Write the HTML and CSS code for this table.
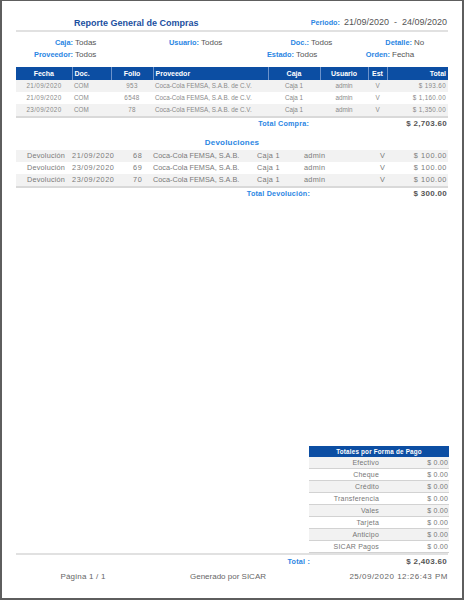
FILE: index.html
```html
<!DOCTYPE html>
<html lang="es">
<head>
<meta charset="utf-8">
<title>Reporte General de Compras</title>
<link rel="stylesheet" href="styles.css">
</head>
<body>
<div class="page">
  <header class="top">
    <h1 class="title">Reporte General de Compras</h1>
    <div class="period"><span class="lbl">Periodo:</span><span class="pval">21/09/2020  -  24/09/2020</span></div>
  </header>
  <div class="rule"></div>

  <div class="filters r1">
    <span class="lbl">Caja:</span><span class="val">Todas</span>
    <span class="lbl">Usuario:</span><span class="val">Todos</span>
    <span class="lbl">Doc.:</span><span class="val">Todos</span>
    <span class="lbl">Detalle:</span><span class="val">No</span>
  </div>
  <div class="filters r2">
    <span class="lbl">Proveedor:</span><span class="val">Todos</span>
    <span class="lbl">Estado:</span><span class="val">Todos</span>
    <span class="lbl">Orden:</span><span class="val">Fecha</span>
  </div>

  <table class="grid">
    <colgroup>
      <col class="w-fecha"><col class="w-doc"><col class="w-folio"><col class="w-prov">
      <col class="w-caja"><col class="w-usr"><col class="w-est"><col class="w-tot">
    </colgroup>
    <thead>
      <tr>
        <th class="c">Fecha</th><th class="l">Doc.</th><th class="c">Folio</th><th class="l">Proveedor</th>
        <th class="c">Caja</th><th class="c">Usuario</th><th class="c">Est</th><th class="r">Total</th>
      </tr>
    </thead>
    <tbody>
      <tr class="odd"><td class="c num">21/09/2020</td><td class="l">COM</td><td class="c num">953</td><td class="l">Coca-Cola FEMSA, S.A.B. de C.V.</td><td class="c">Caja 1</td><td class="c">admin</td><td class="c">V</td><td class="r num">$ 193.60</td></tr>
      <tr><td class="c num">21/09/2020</td><td class="l">COM</td><td class="c num">6548</td><td class="l">Coca-Cola FEMSA, S.A.B. de C.V.</td><td class="c">Caja 1</td><td class="c">admin</td><td class="c">V</td><td class="r num">$ 1,160.00</td></tr>
      <tr class="odd"><td class="c num">23/09/2020</td><td class="l">COM</td><td class="c num">78</td><td class="l">Coca-Cola FEMSA, S.A.B. de C.V.</td><td class="c">Caja 1</td><td class="c">admin</td><td class="c">V</td><td class="r num">$ 1,350.00</td></tr>
    </tbody>
  </table>

  <div class="sum sum-compra"><span class="slbl">Total Compra:</span><span class="sval">$ 2,703.60</span></div>

  <h2 class="section">Devoluciones</h2>
  <table class="dev">
    <colgroup>
      <col class="d1"><col class="d2"><col class="d3"><col class="d4">
      <col class="d5"><col class="d6"><col class="d7"><col class="d8">
    </colgroup>
    <tbody>
      <tr class="odd"><td class="p1">Devolución</td><td class="p2 num">21/09/2020</td><td class="p3 num">68</td><td class="p4">Coca-Cola FEMSA, S.A.B.</td><td class="p5">Caja 1</td><td class="p6">admin</td><td class="p7">V</td><td class="r num">$ 100.00</td></tr>
      <tr><td class="p1">Devolución</td><td class="p2 num">23/09/2020</td><td class="p3 num">69</td><td class="p4">Coca-Cola FEMSA, S.A.B.</td><td class="p5">Caja 1</td><td class="p6">admin</td><td class="p7">V</td><td class="r num">$ 100.00</td></tr>
      <tr class="odd"><td class="p1">Devolución</td><td class="p2 num">23/09/2020</td><td class="p3 num">70</td><td class="p4">Coca-Cola FEMSA, S.A.B.</td><td class="p5">Caja 1</td><td class="p6">admin</td><td class="p7">V</td><td class="r num">$ 100.00</td></tr>
    </tbody>
  </table>

  <div class="sum sum-dev"><span class="slbl">Total Devolución:</span><span class="sval">$ 300.00</span></div>

  <div class="spacer"></div>

  <table class="pay">
    <thead><tr><th colspan="2">Totales por Forma de Pago</th></tr></thead>
    <tbody>
      <tr class="odd"><td class="pl">Efectivo</td><td class="pv">$ 0.00</td></tr>
      <tr><td class="pl">Cheque</td><td class="pv">$ 0.00</td></tr>
      <tr class="odd"><td class="pl">Crédito</td><td class="pv">$ 0.00</td></tr>
      <tr><td class="pl">Transferencia</td><td class="pv">$ 0.00</td></tr>
      <tr class="odd"><td class="pl">Vales</td><td class="pv">$ 0.00</td></tr>
      <tr><td class="pl">Tarjeta</td><td class="pv">$ 0.00</td></tr>
      <tr class="odd"><td class="pl">Anticipo</td><td class="pv">$ 0.00</td></tr>
      <tr><td class="pl">SICAR Pagos</td><td class="pv">$ 0.00</td></tr>
    </tbody>
  </table>
  <div class="rule rule-bottom"></div>
  <div class="sum sum-total"><span class="slbl">Total :</span><span class="sval">$ 2,403.60</span></div>

  <footer class="foot">
    <span class="f1">Página 1 / 1</span>
    <span class="f2">Generado por SICAR</span>
    <span class="f3">25/09/2020 12:26:43 PM</span>
  </footer>
</div>
</body>
</html>
```

FILE: styles.css
```css
html, body {
  margin: 0;
  padding: 0;
  background: #ffffff;
}
body {
  font-family: "Liberation Sans", Arial, sans-serif;
  color: #555;
}
.page {
  box-sizing: border-box;
  width: 464px;
  height: 600px;
  border: 2px solid #5e5e5e;
  border-top-width: 1px;
  padding: 0 14px;
  display: flex;
  flex-direction: column;
}

/* header */
.top {
  box-sizing: border-box;
  height: 29px;
  display: flex;
  align-items: flex-end;
  padding-bottom: 2px;
}
.title {
  margin: 0 0 0 58px;
  font-size: 9px;
  line-height: 10px;
  font-weight: bold;
  color: #1b4f9f;
}
.period {
  margin-left: auto;
  margin-right: 1px;
  display: flex;
  align-items: baseline;
  line-height: 10px;
}
.period .lbl {
  font-size: 7.2px;
  font-weight: bold;
  color: #2b86e3;
  margin-right: 4px;
}
.pval {
  font-size: 9px;
  white-space: pre;
  color: #555;
}
.rule {
  height: 2px;
  background: #e1e1e1;
  flex: none;
}

/* filters */
.filters {
  display: grid;
  height: 12px;
  line-height: 12px;
  align-items: baseline;
}
.r1 {
  margin-top: 5px;
  grid-template-columns: 57px 67px 59px 63px 47px 51px 52px 1fr;
}
.r2 {
  grid-template-columns: 57px 127px 94px 51px 45px 1fr;
}
.filters .lbl {
  text-align: right;
  font-size: 7.4px;
  font-weight: bold;
  color: #2b86e3;
}
.filters .val {
  padding-left: 2px;
  font-size: 8px;
  color: #555;
}

/* compras table */
.grid {
  margin-top: 6px;
  width: 432px;
  border-collapse: collapse;
  table-layout: fixed;
  border-bottom: 2px solid #d9d9d9;
  flex: none;
}
.w-fecha { width: 56px; }
.w-doc { width: 39px; }
.w-folio { width: 42px; }
.w-prov { width: 115px; }
.w-caja { width: 52px; }
.w-usr { width: 48px; }
.w-est { width: 19px; }
.w-tot { width: 61px; }
.grid th {
  background: #0c4ea3;
  color: #fff;
  font-size: 7px;
  font-weight: bold;
  height: 13px;
  padding: 0 2px;
  line-height: 13px;
  border-left: 1px solid #6d93cb;
  white-space: nowrap;
}
.grid th:first-child { border-left: none; }
.grid td {
  height: 12px;
  padding: 0 2px;
  line-height: 12px;
  font-size: 6.3px;
  color: #8a8a8a;
  white-space: nowrap;
  overflow: hidden;
}
.grid .num { letter-spacing: 0.35px; }
.odd td { background: #f2f2f2; }
.c { text-align: center; }
.l { text-align: left; }
.r { text-align: right; }

/* sums */
.sum {
  display: grid;
  grid-template-columns: 293px 1fr;
  height: 12px;
  line-height: 12px;
  align-items: baseline;
  flex: none;
}
.sum-dev { grid-template-columns: 294px 1fr; }
.sum-total {
  grid-template-columns: 294px 1fr;
  height: 14px;
  line-height: 14px;
}
.slbl {
  text-align: right;
  font-size: 7.2px;
  font-weight: bold;
  color: #2b86e3;
  letter-spacing: 0.2px;
}
.sval {
  text-align: right;
  padding-right: 1px;
  font-size: 8px;
  font-weight: bold;
  color: #555;
  letter-spacing: 0.3px;
}

.section {
  margin: 7px 0 1px;
  height: 12px;
  line-height: 12px;
  font-size: 8px;
  font-weight: bold;
  text-align: center;
  color: #2b86e3;
  letter-spacing: 0.2px;
}

/* devoluciones table */
.dev {
  width: 432px;
  border-collapse: collapse;
  table-layout: fixed;
  border-bottom: 2px solid #d9d9d9;
  flex: none;
}
.d1 { width: 52px; }
.d2 { width: 60px; }
.d3 { width: 22px; }
.d4 { width: 104px; }
.d5 { width: 46px; }
.d6 { width: 75px; }
.d7 { width: 20px; }
.d8 { width: 53px; }
.dev td {
  height: 12px;
  line-height: 12px;
  padding: 0;
  font-size: 7.3px;
  color: #7a7a7a;
  white-space: nowrap;
  overflow: hidden;
}
.dev .num { letter-spacing: 0.6px; }
.dev .p1 { padding-left: 11px; letter-spacing: 0.2px; }
.dev .p2 { padding-left: 4px; }
.dev .p3 { padding-left: 5px; }
.dev .p4 { padding-left: 3px; }
.dev .p5 { padding-left: 3px; letter-spacing: 0.3px; }
.dev .p6 { padding-left: 4px; letter-spacing: 0.3px; }
.dev .p7 { padding-left: 5px; }
.dev .r { padding-right: 1px; }

.spacer { flex: 1; }

/* pagos */
.pay {
  align-self: flex-end;
  width: 140px;
  margin-right: -1px;
  border-collapse: collapse;
  table-layout: fixed;
  flex: none;
}
.pay th {
  background: #0c4ea3;
  color: #fff;
  font-size: 6.3px;
  font-weight: bold;
  height: 11px;
  line-height: 11px;
  padding: 0;
  text-align: center;
  letter-spacing: 0.2px;
}
.pay td {
  height: 11px;
  line-height: 11px;
  padding: 0;
  font-size: 7px;
  color: #777;
  border-bottom: 1px solid #d2d2d2;
  letter-spacing: 0.2px;
}
.pay .pl {
  width: 64px;
  text-align: right;
}
.pay .pv {
  text-align: right;
  padding-right: 1px;
}
.rule-bottom { background: #e1e1e1; }

/* footer */
.foot {
  display: grid;
  grid-template-columns: 134px 156px 1fr;
  height: 16px;
  line-height: 16px;
  margin-bottom: 13px;
  font-size: 8px;
  color: #666;
  flex: none;
}
.f1, .f2 { text-align: center; }
.f1 { letter-spacing: 0.2px; }
.f3 { text-align: right; letter-spacing: 0.5px; }
```
